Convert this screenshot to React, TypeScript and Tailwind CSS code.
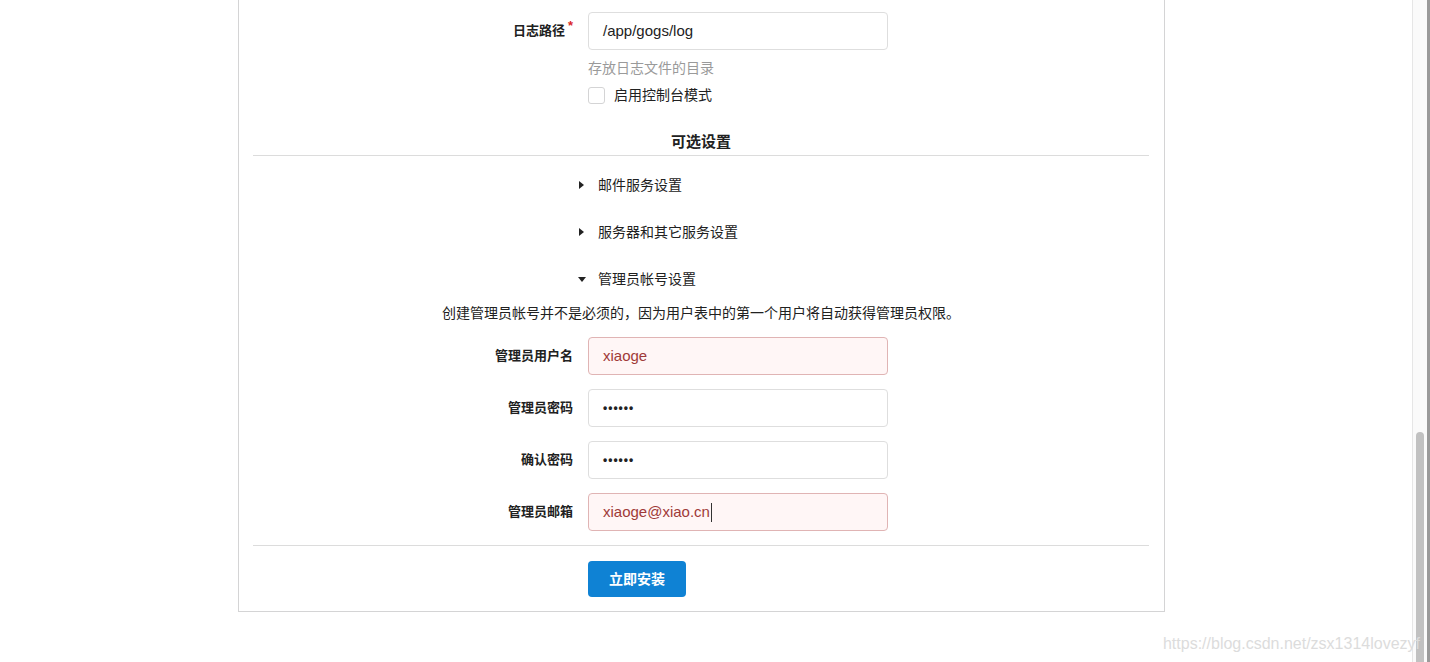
import React from 'react';

const font = "font-['Liberation_Sans','Noto_Sans_CJK_SC',sans-serif]";

type FieldProps = {
  label: string;
  value: string;
  required?: boolean;
  error?: boolean;
  password?: boolean;
  caret?: boolean;
};

const Field = ({ label, value, required, error, password, caret }: FieldProps) => (
  <div className="flex items-center">
    <label className="w-[320px] text-right text-[13px] font-bold text-[#212121] leading-[38px]">
      {label}
      {required && <span className="relative -top-[5px] ml-[3px] text-[#db2828]">*</span>}
    </label>
    <div
      className={
        'ml-[15px] flex h-[38px] w-[300px] items-center rounded-[4px] border px-[14px] text-[15px] ' +
        (error ? 'border-[#e0b4b4] bg-[#fff6f6] text-[#9f3a38]' : 'border-[#dedede] bg-white text-[#222]')
      }
    >
      {password ? <span className="tracking-[1px] text-[12px] font-bold">••••••</span> : value}
      {caret && <span className="ml-[1px] inline-block h-[19px] w-px bg-[#333]" />}
    </div>
  </div>
);

const Accordion = ({ title, open }: { title: string; open?: boolean }) => (
  <div className="flex h-[20px] items-center pl-[325px]">
    <div className={'flex w-[20px] ' + (open ? 'pl-0' : 'pl-[1px]')}>
      {open ? (
        <svg width="8" height="5" viewBox="0 0 8 5"><path d="M0 0h8L4 5z" fill="#222" /></svg>
      ) : (
        <svg width="5" height="8" viewBox="0 0 5 8"><path d="M0 0v8l5-4z" fill="#222" /></svg>
      )}
    </div>
    <span className="text-[14px] text-[#212121]">{title}</span>
  </div>
);

export default function App() {
  return (
    <div className={`relative flex h-[662px] overflow-hidden bg-white ${font}`}>
      <main className="flex-1">
        <div className="ml-[238px] w-[927px] border-x border-b border-[#d4d4d5] pl-[14px] pr-[15px] pt-[12px] pb-[14px]">
          <Field label="日志路径" value="/app/gogs/log" required />
          <div className="ml-[335px] mt-[9px] h-[18px] text-[14px] leading-[18px] text-[#9a9a9a]">
            存放日志文件的目录
          </div>
          <div className="ml-[335px] mt-[9px] flex h-[18px] items-center">
            <span className="h-[17px] w-[17px] rounded-[3px] border border-[#d4d4d5] bg-white" />
            <span className="ml-[9px] text-[14px] text-[#212121]">启用控制台模式</span>
          </div>

          <h4 className="mt-[28px] h-[20px] text-center text-[15px] font-bold leading-[20px] text-[#212121]">
            可选设置
          </h4>
          <div className="mt-[3px] border-t border-[#dcdcdc]" />

          <div className="mt-[19px] flex flex-col gap-[27px]">
            <Accordion title="邮件服务设置" />
            <Accordion title="服务器和其它服务设置" />
            <Accordion title="管理员帐号设置" open />
          </div>

          <p className="mt-[14px] h-[20px] text-center text-[14px] leading-[20px] text-[#212121]">
            创建管理员帐号并不是必须的，因为用户表中的第一个用户将自动获得管理员权限。
          </p>

          <div className="mt-[14px] flex flex-col gap-[14px]">
            <Field label="管理员用户名" value="xiaoge" error />
            <Field label="管理员密码" value="" password />
            <Field label="确认密码" value="" password />
            <Field label="管理员邮箱" value="xiaoge@xiao.cn" error caret />
          </div>

          <div className="mt-[14px] border-t border-[#dcdcdc]" />

          <div className="mt-[15px] pl-[335px]">
            <button className="h-[36px] w-[98px] rounded-[4px] bg-[#0f82d4] text-[14px] font-bold text-white">
              立即安装
            </button>
          </div>
        </div>
      </main>

      {/* scrollbar */}
      <div className="flex w-[18px] border-l border-[#e6e6e6] border-r-[3px] border-r-[#9a9a9a] bg-[#fafafa] pl-[3px]">
        <div className="mt-[432px] h-[240px] w-[8px] rounded-[4px] bg-[#c1c1c1]" />
      </div>

      <div className="absolute bottom-[6px] right-[10px] text-[16px] text-[#dcdcdc] font-['Liberation_Sans',sans-serif]">
        https://blog.csdn.net/zsx1314lovezyf
      </div>
    </div>
  );
}
